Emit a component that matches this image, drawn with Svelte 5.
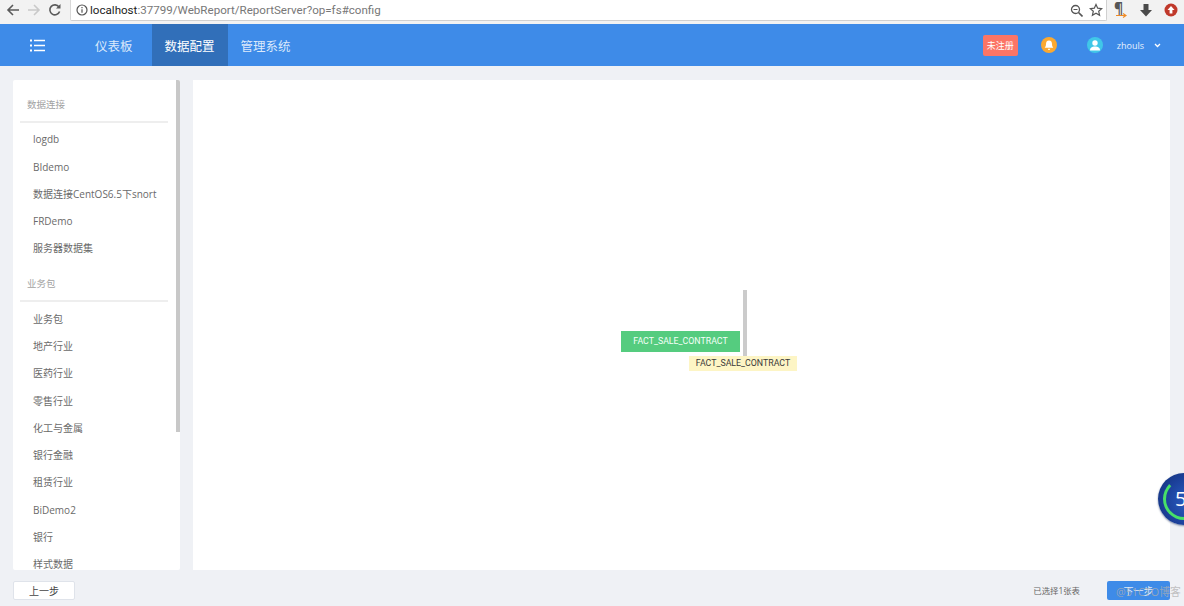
<script>
  const conn = ['logdb', 'BIdemo', '数据连接CentOS6.5下snort', 'FRDemo', '服务器数据集'];
  const pkgs = ['业务包', '地产行业', '医药行业', '零售行业', '化工与金属', '银行金融', '租赁行业', 'BiDemo2', '银行', '样式数据'];
</script>

<div class="page">
  <div class="chrome">
    <svg class="nav-ico" width="14" height="14" viewBox="0 0 14 14"><path d="M13 7H2M7 2L2 7l5 5" fill="none" stroke="#5a5a5a" stroke-width="1.6"/></svg>
    <svg class="nav-ico" width="14" height="14" viewBox="0 0 14 14"><path d="M1 7h11M7 2l5 5-5 5" fill="none" stroke="#c9c9c9" stroke-width="1.6"/></svg>
    <svg class="nav-ico" width="14" height="14" viewBox="0 0 14 14"><path d="M11.6 8.5A5 5 0 1 1 11 4" fill="none" stroke="#5a5a5a" stroke-width="1.6"/><path d="M12.5 1v4.5H8z" fill="#5a5a5a"/></svg>
    <div class="omni">
      <svg class="info" width="12" height="12" viewBox="0 0 12 12"><circle cx="6" cy="6" r="5" fill="none" stroke="#555" stroke-width="1.2"/><path d="M6 5.2v3.6M6 3v1.2" stroke="#555" stroke-width="1.2"/></svg>
      <span class="url"><b>localhost</b>:37799/WebReport/ReportServer?op=fs#config</span>
      <svg class="zoomi" width="13" height="13" viewBox="0 0 13 13"><circle cx="5.5" cy="5.5" r="4" fill="none" stroke="#555" stroke-width="1.3"/><path d="M8.5 8.500l4 4" stroke="#555" stroke-width="1.6"/><path d="M3.500 5.500h4" stroke="#555"/></svg>
      <svg width="14" height="14" viewBox="0 0 14 14"><path d="M7 1.500l1.700 3.700 4 .4-3 2.700.9 4L7 10.300l-3.600 2 .9-4-3-2.700 4-.4z" fill="none" stroke="#555" stroke-width="1.2"/></svg>
    </div>
    <div class="exts">
      <span class="pilcrow">¶<svg width="11" height="5" viewBox="0 0 11 5"><path d="M0 2.500h9M7 .5l3 2-3 2" fill="none" stroke="#f08a24" stroke-width="1.2"/></svg></span>
      <svg width="14" height="14" viewBox="0 0 14 14"><path d="M4.500 1h5v6H13l-6 6.500L1 7h3.500z" fill="#4a4a4a"/></svg>
      <svg width="14" height="14" viewBox="0 0 14 14"><circle cx="7" cy="7" r="6.500" fill="#c0392b"/><path d="M7 3l3.500 4H8.400v3.500H5.600V7H3.500z" fill="#fff"/></svg>
    </div>
  </div>

  <header class="top">
    <svg class="menu" width="15" height="13" viewBox="0 0 15 13"><path d="M4 1.500h11M4 6.500h11M4 11.500h11" stroke="#fff" stroke-width="1.6"/><path d="M0 1.500h2M0 6.500h2M0 11.500h2" stroke="#fff" stroke-width="1.8"/></svg>
    <nav class="tabs">
      <span class="tab first">仪表板</span>
      <span class="tab on">数据配置</span>
      <span class="tab">管理系统</span>
    </nav>
    <div class="right">
      <span class="unreg">未注册</span>
      <span class="bell"><svg width="10" height="11" viewBox="0 0 10 11"><path d="M5 .5c2.200 0 3 1.800 3 3.600 0 2 .6 2.700 1.300 3.600H.7C1.400 6.800 2 6.100 2 4.100 2 2.300 2.800.5 5 .5zM3.800 8.800h2.400A1.200 1.200 0 0 1 3.800 8.800z" fill="#fff"/></svg></span>
      <span class="avatar"><svg width="10" height="11" viewBox="0 0 10 11"><circle cx="5" cy="3" r="2.700" fill="#fff"/><path d="M0 10.500c0-3 2-4 5-4s5 1 5 4z" fill="#fff"/></svg></span>
      <span class="user">zhouls</span>
      <svg class="caret" width="7" height="5" viewBox="0 0 7 5"><path d="M1 1l2.500 2.500L6 1" fill="none" stroke="#fff" stroke-width="1.300"/></svg>
    </div>
  </header>

  <div class="body">
    <aside class="side">
      <div class="scroll"></div>
      <div class="head first">数据连接</div>
      {#each conn as c}<div class="item">{c}</div>{/each}
      <div class="head">业务包</div>
      {#each pkgs as p}<div class="item">{p}</div>{/each}
    </aside>
    <main class="canvas">
      <div class="node">FACT_SALE_CONTRACT</div>
      <div class="guide"></div>
      <div class="tip">FACT_SALE_CONTRACT</div>
    </main>
  </div>

  <footer class="foot">
    <button class="prev">上一步</button>
    <span class="count">已选择1张表</span>
    <button class="next">下一步</button>
  </footer>

  <div class="widget"><span>5</span></div>
  <div class="mark">@51CTO博客</div>
</div>

<style>
  :global(body) { margin: 0; }
  .page {
    position: relative; width: 1184px; height: 606px; overflow: hidden;
    background: #eff1f5; display: flex; flex-direction: column;
    font-family: "Open Sans", "Noto Sans CJK SC", sans-serif;
  }
  .chrome { height: 24px; background: #f2f2f2; display: flex; align-items: center; padding: 0 0 4px 6px; box-sizing: border-box; }
  .nav-ico { margin-right: 7px; flex: none; }
  .omni {
    width: 1037px; height: 21px; margin-left: 1px; align-self: flex-start; flex: none; background: #fff; box-sizing: border-box;
    border: 1px solid #d0d0d0; border-top: 0; border-left-color: #d8d8d8; border-radius: 0 0 2px 2px;
    display: flex; align-items: center; padding: 0 3px 0 5px;
  }
  .info { margin-right: 2px; flex: none; }
  .url { font-family: Roboto, sans-serif; font-size: 11.600px; color: #777; flex: 1; white-space: nowrap; }
  .url b { font-weight: 400; color: #222; }
  .zoomi { margin-right: 6px; }
  .exts { display: flex; align-items: center; gap: 11px; margin-left: 7px; }
  .pilcrow { position: relative; width: 14px; height: 18px; font-size: 14px; line-height: 14px; font-weight: 700; color: #555; }
  .pilcrow svg { position: absolute; left: 2px; bottom: 1px; }

  .top { height: 42px; background: #3e8be8; display: flex; align-items: center; color: #fff; }
  .menu { margin-left: 30px; flex: none; }
  .tabs { display: flex; height: 100%; margin-left: 37px; }
  .tab {
    display: flex; align-items: center; justify-content: center; height: 100%;
    font-size: 12.500px; padding: 0 13px; color: #dbe9fb; box-sizing: border-box;
  }
  .tab.first { padding-right: 19px; }
  .tab.on { background: #316fb9; color: #fff; }
  .right { margin-left: auto; display: flex; align-items: center; padding-right: 23px; }
  .unreg {
    width: 35px; height: 21px; background: #fb7566; border-radius: 2px; font-size: 9px;
    display: flex; align-items: center; justify-content: center; margin-right: 23px;
  }
  .bell, .avatar { width: 16px; height: 16px; border-radius: 50%; display: flex; align-items: center; justify-content: center; }
  .bell { background: #fba930; margin-right: 30px; }
  .avatar { background: #40c7e8; margin-right: 14px; }
  .user { font-size: 9px; color: #e6f0fd; margin-right: 10px; }

  .body { flex: 1; min-height: 0; display: flex; padding: 14px 14px 0 13px; gap: 13px; }
  .side {
    position: relative; width: 167px; background: #fff; border-radius: 2px; overflow: hidden; flex: none;
    box-sizing: border-box; padding: 0 12px 0 7px;
  }
  .scroll { position: absolute; right: 0; top: 0; width: 4px; height: 352px; background: #c8c8c8; }
  .head {
    height: 23.500px; line-height: 16px; font-size: 9.500px; color: #a2a2a2; padding-left: 7px;
    border-bottom: 2px solid #eeeeee; margin-top: 13.600px; margin-bottom: 3.800px;
  }
  .head.first { margin-top: 17px; }
  .item { height: 27.300px; line-height: 27.300px; font-size: 10px; color: #6a6a6a; padding-left: 13px; white-space: nowrap; }

  .canvas { position: relative; flex: 1; background: #fff; }
  .node {
    position: absolute; left: 428px; top: 251px; width: 119px; height: 21px; background: #55cc7f;
    color: #f4fff8; font-family: Roboto, sans-serif; font-size: 8.800px; line-height: 20px; text-align: center; box-sizing: border-box;
  }
  .guide { position: absolute; left: 550px; top: 210px; width: 4px; height: 67px; background: #cbcbcb; }
  .tip {
    position: absolute; left: 496px; top: 276px; width: 108px; height: 15px; background: #fdf5c5;
    color: #3a3a3a; font-family: Roboto, sans-serif; font-size: 8.800px; line-height: 15px; text-align: center;
  }

  .foot { height: 36px; flex: none; display: flex; align-items: center; padding: 0 14px 0 13px; }
  .foot button { font-family: inherit; box-sizing: border-box; height: 19px; padding: 0; border-radius: 2px; font-size: 10px; margin-top: 5px; }
  .prev { width: 62px; background: #fff; color: #444; border: 1px solid #dfe3ea; }
  .count { margin-left: auto; margin-right: 27px; font-size: 8.400px; color: #666; margin-top: 4px; }
  .next { width: 63px; background: #3e8be8; color: #dfeaf8; border: 0; }

  .widget {
    position: absolute; left: 1158px; top: 473px; width: 52px; height: 52px; border-radius: 50%;
    background: radial-gradient(circle at 60% 55%, #2a5fc4 0, #1b3f98 60%, #12306f 100%);
    box-shadow: 0 1px 2px #7d8aa5;
  }
  .widget::before {
    content: ""; position: absolute; inset: 5px; border-radius: 50%; border: 3px solid transparent;
    border-left-color: #47e068; border-bottom-color: #47e068;
  }
  .widget span { position: absolute; left: 17px; top: 12px; font-size: 20px; line-height: 28px; color: #fff; }
  .mark {
    position: absolute; left: 1116px; top: 584px; font-size: 10.800px; line-height: 16px;
    color: rgba(175, 175, 175, .75); white-space: nowrap;
  }
</style>
